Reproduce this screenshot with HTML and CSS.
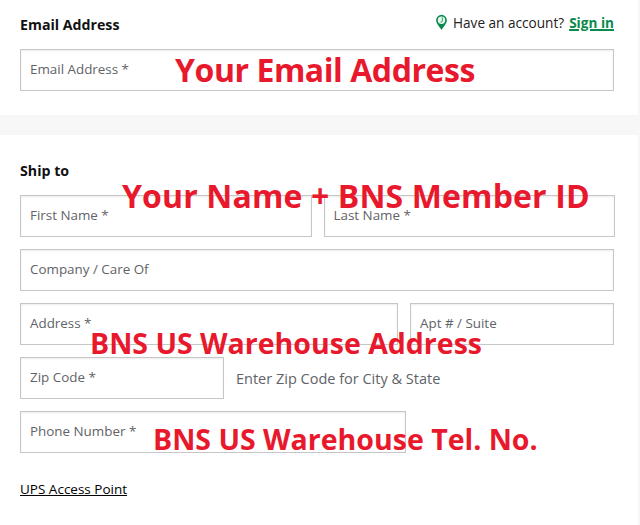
FILE: index.html
```html
<!DOCTYPE html>
<html lang="en">
<head>
    <meta charset="UTF-8">
    <title>Checkout</title>
    <link rel="stylesheet" href="styles.css">
</head>
<body>
    <div class="page">
        <section class="section email-section">
            <div class="section-head">
                <h2>Email Address</h2>
                <div class="account">
                    <svg class="pin" width="13" height="17" viewBox="0 0 13 17">
                        <path d="M6.5 16C4.8 12.8 1.1 9.8 1.1 6.2a5.4 5.4 0 0 1 10.8 0c0 3.6-3.7 6.6-5.4 9.8z" fill="#0b8a4d"/>
                        <circle cx="6.5" cy="6.2" r="3.7" fill="#e6f4ec"/>
                        <path d="M7.4 3.4v3.4c0 1.1-1 1.5-1.9 1" fill="none" stroke="#0b8a4d" stroke-width="0.8"/>
                    </svg>
                    <span>Have an account?</span>
                    <a class="sign-in" href="#">Sign in</a>
                </div>
            </div>
            <div class="row">
                <div class="field grow">Email Address *</div>
            </div>
        </section>
        <div class="band"></div>
        <section class="section ship-section">
            <h2>Ship to</h2>
            <div class="rows">
                <div class="row name-row">
                    <div class="field grow">First Name *</div>
                    <div class="field grow">Last Name *</div>
                </div>
                <div class="row">
                    <div class="field grow">Company / Care Of</div>
                </div>
                <div class="row">
                    <div class="field address">Address *</div>
                    <div class="field grow">Apt # / Suite</div>
                </div>
                <div class="row">
                    <div class="field zip">Zip Code *</div>
                    <span class="hint">Enter Zip Code for City &amp; State</span>
                </div>
                <div class="row">
                    <div class="field phone">Phone Number *</div>
                </div>
            </div>
            <a class="ups" href="#">UPS Access Point</a>
        </section>
    </div>
    <div class="note note-email">Your Email Address</div>
    <div class="note note-name">Your Name + BNS Member ID</div>
    <div class="note note-address">BNS US Warehouse Address</div>
    <div class="note note-tel">BNS US Warehouse Tel. No.</div>
</body>
</html>
```

FILE: styles.css
```css
* {
    box-sizing: border-box;
}
body {
    margin: 0;
    height: 525px;
    overflow: hidden;
    background: #f8f8f8;
    font-family: "Open Sans", "Noto Sans", sans-serif;
    position: relative;
}
.page {
    width: 638px;
    height: 525px;
    background: #fff;
}
h2 {
    margin: 0;
    font-size: 14.2px;
    line-height: 20px;
    font-weight: 700;
    color: #111;
}
.section {
    padding: 0 24px 0 20px;
}
.email-section {
    height: 115px;
    padding-top: 15px;
}
.section-head {
    display: flex;
    justify-content: space-between;
    align-items: center;
    height: 20px;
    margin-bottom: 14px;
}
.account {
    display: flex;
    align-items: center;
    font-size: 13.6px;
    color: #222;
    margin-top: -6px;
}
.pin {
    margin-right: 5px;
}
.sign-in {
    margin-left: 5px;
    color: #0b8a4d;
    font-weight: 700;
    text-decoration-thickness: 1.5px;
}
.band {
    height: 20px;
    width: 640px;
    background: #f7f7f7;
}
.ship-section {
    padding-top: 26px;
}
.rows {
    display: flex;
    flex-direction: column;
    gap: 12px;
    margin-top: 14px;
}
.row {
    display: flex;
    align-items: center;
    gap: 12px;
}
.name-row {
    margin-right: -1px;
}
.field {
    height: 42px;
    padding: 0 9px 2px;
    display: flex;
    align-items: center;
    border: 1px solid #c6c6c6;
    box-shadow: inset 0 1px 2px rgba(0, 0, 0, 0.08);
    font-size: 13.4px;
    color: #5f6368;
}
.grow {
    flex: 1;
}
.address {
    width: 378px;
}
.zip {
    width: 204px;
}
.phone {
    width: 386px;
}
.hint {
    font-size: 14.5px;
    color: #5f6368;
}
.ups {
    display: inline-block;
    margin-top: 27px;
    font-size: 13.5px;
    color: #000;
}
/* red notes typed over the screenshot */
.note {
    position: absolute;
    font-family: "Open Sans", sans-serif;
    font-weight: 700;
    font-size: 32px;
    line-height: 40px;
    color: #e8192c;
    white-space: nowrap;
}
.note-email {
    left: 175px;
    top: 50px;
    letter-spacing: -0.45px;
}
.note-name {
    left: 122px;
    top: 176px;
    letter-spacing: 0.13px;
}
.note-address {
    left: 90px;
    top: 323px;
    font-size: 28.5px;
}
.note-tel {
    left: 153px;
    top: 419px;
    font-size: 28.5px;
}
```
